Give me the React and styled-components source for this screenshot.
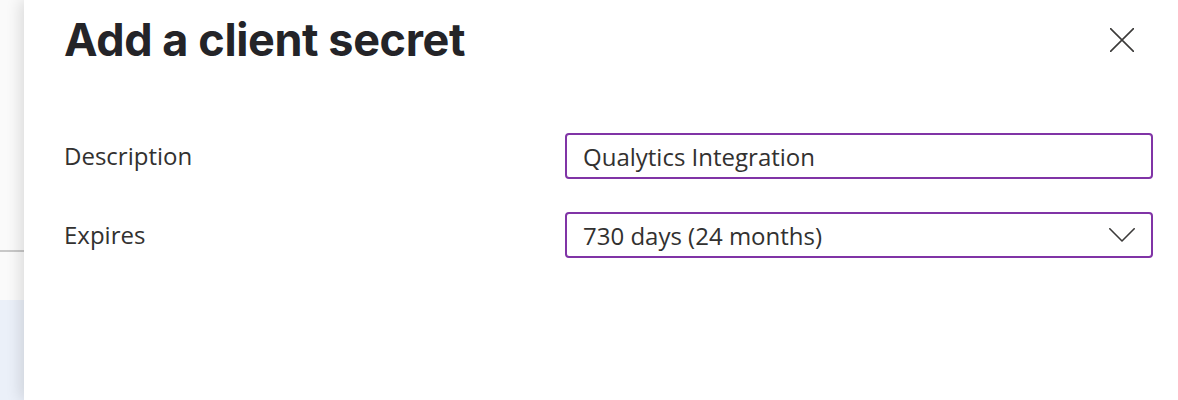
import React, { useState } from 'react'
import styled, { createGlobalStyle } from 'styled-components'

const GlobalStyle = createGlobalStyle`
  html, body {
    margin: 0;
    padding: 0;
    background: #ffffff;
  }
  body {
    font-family: "Open Sans", "Noto Sans", sans-serif;
    color: #323130;
  }
`

const Page = styled.div`
  display: flex;
  width: 1178px;
  height: 400px;
  overflow: hidden;
`

const Backdrop = styled.div`
  width: 24px;
  flex: none;
  display: flex;
  flex-direction: column;
  background: #fafafa;
`

const BackdropTop = styled.div`
  height: 250px;
  border-bottom: 2px solid #c8c8c8;
`

const BackdropGap = styled.div`
  height: 48px;
`

const BackdropBlue = styled.div`
  flex: 1;
  background: #ebf0f9;
`

const Panel = styled.div`
  flex: 1;
  position: relative;
  background: #ffffff;
  box-shadow: -4px 0 14px rgba(0, 0, 0, 0.12);
  padding: 13px 25px 0 40px;
  display: flex;
  flex-direction: column;
`

const Header = styled.div`
  display: flex;
  align-items: center;
  justify-content: space-between;
`

const Title = styled.h1`
  margin: 0;
  font-family: Inter, "Liberation Sans", sans-serif;
  font-size: 45px;
  line-height: 54px;
  font-weight: 700;
  letter-spacing: -0.4px;
  color: #242428;
`

const CloseButton = styled.button`
  width: 40px;
  height: 40px;
  margin-right: 11px;
  border: none;
  background: none;
  padding: 0;
  display: flex;
  align-items: center;
  justify-content: center;
  cursor: pointer;
  color: #323130;
`

const Form = styled.div`
  margin-top: 66px;
  display: flex;
  flex-direction: column;
  gap: 33px;
`

const Row = styled.div`
  display: grid;
  grid-template-columns: 501px 1fr;
  align-items: center;
`

const Label = styled.label`
  font-size: 24px;
  line-height: 32px;
  color: #323130;
`

const Field = styled.div`
  height: 46px;
  box-sizing: border-box;
  border: 2px solid #8034a6;
  border-radius: 4px;
  display: flex;
  align-items: center;
  justify-content: space-between;
  padding: 0 16px 0 16px;
  background: #fff;
`

const TextInput = styled.input`
  flex: 1;
  border: none;
  outline: none;
  padding: 0;
  font-family: "Open Sans", "Noto Sans", sans-serif;
  font-size: 24px;
  color: #323130;
  background: transparent;
`

const SelectValue = styled.span`
  font-size: 24px;
  color: #323130;
`

const CloseIcon = () => (
  <svg width="24" height="24" viewBox="0 0 24 24" fill="none">
    <path d="M0.5 0.5 L23.5 23.5 M23.5 0.5 L0.5 23.5" stroke="#3b3a39" strokeWidth="1.6" strokeLinecap="round" />
  </svg>
)

const Chevron = () => (
  <svg width="26" height="14" viewBox="0 0 26 14" fill="none">
    <path d="M0.8 0.8 L13 13 L25.2 0.8" stroke="#3b3a39" strokeWidth="1.6" strokeLinecap="round" strokeLinejoin="round" />
  </svg>
)

export default function App() {
  const [description, setDescription] = useState('Qualytics Integration')

  return (
    <>
      <GlobalStyle />
      <Page>
        <Backdrop>
          <BackdropTop />
          <BackdropGap />
          <BackdropBlue />
        </Backdrop>
        <Panel>
          <Header>
            <Title>Add a client secret</Title>
            <CloseButton aria-label="Close">
              <CloseIcon />
            </CloseButton>
          </Header>
          <Form>
            <Row>
              <Label>Description</Label>
              <Field>
                <TextInput value={description} onChange={e => setDescription(e.target.value)} />
              </Field>
            </Row>
            <Row>
              <Label>Expires</Label>
              <Field>
                <SelectValue>730 days (24 months)</SelectValue>
                <Chevron />
              </Field>
            </Row>
          </Form>
        </Panel>
      </Page>
    </>
  )
}
